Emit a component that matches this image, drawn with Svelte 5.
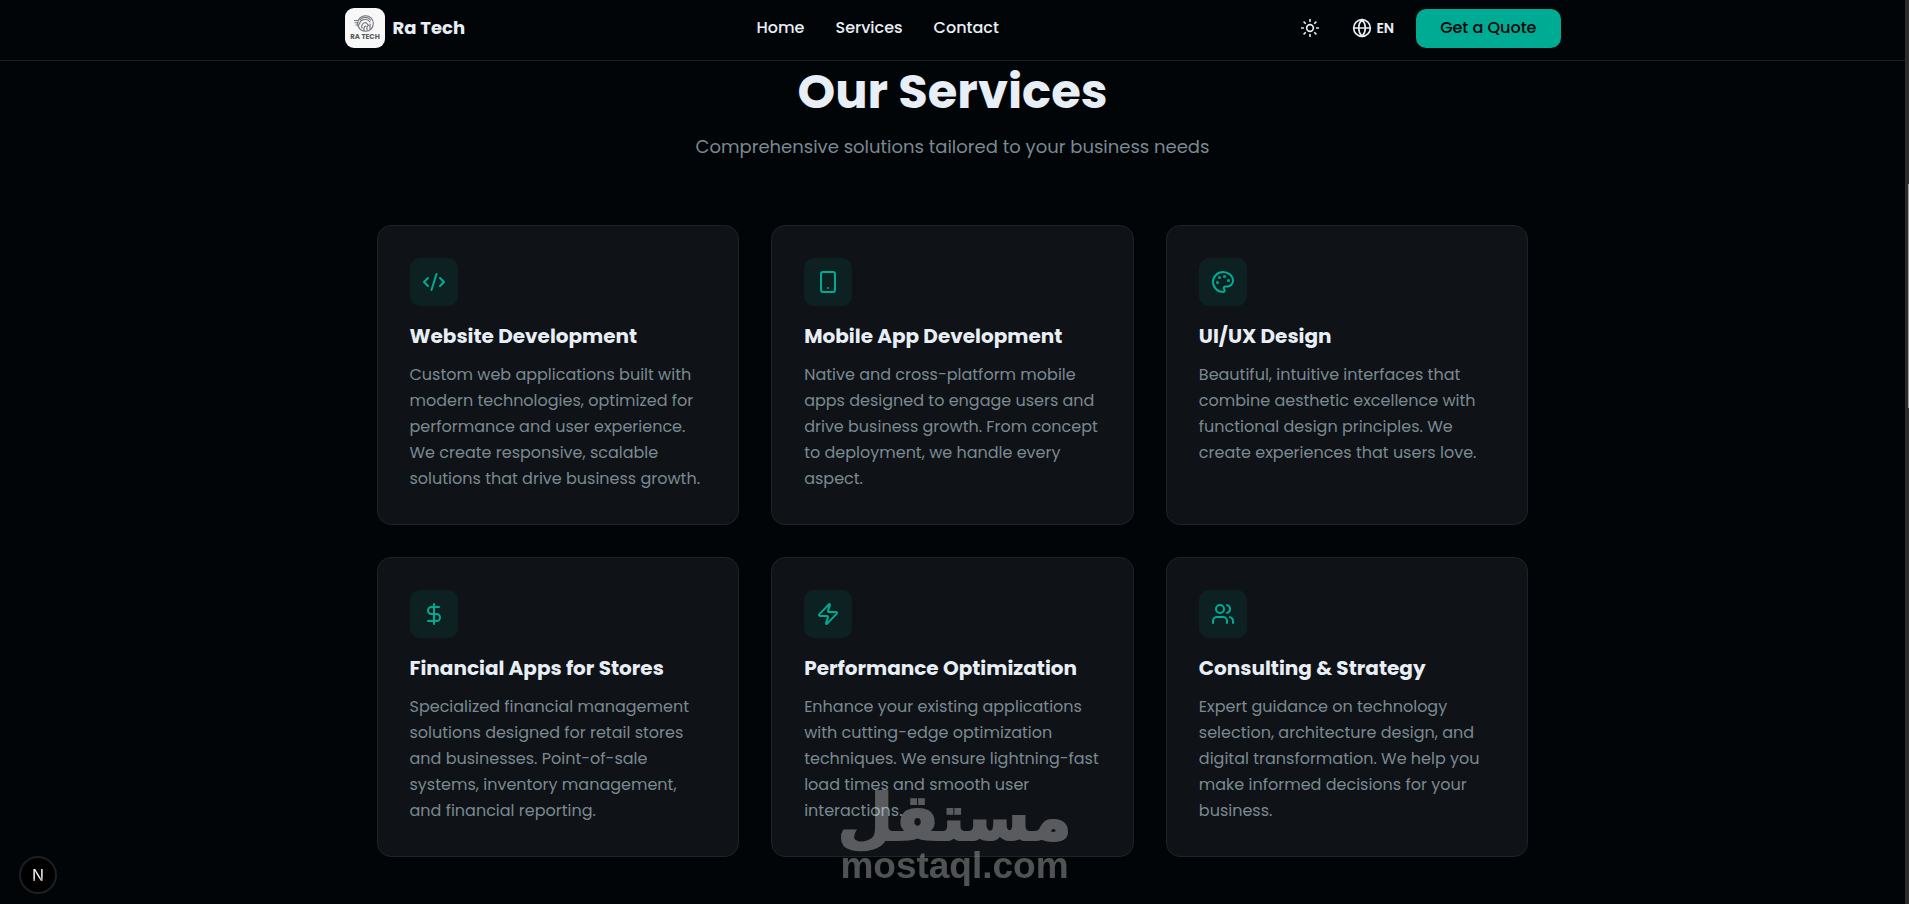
<script lang="ts">
    type Service = {
        title: string;
        text: string;
        icon: string;
    };

    const links = ["Home", "Services", "Contact"];

    const services: Service[] = [
        {
            title: "Website Development",
            text: "Custom web applications built with modern technologies, optimized for performance and user experience. We create responsive, scalable solutions that drive business growth.",
            icon: "code",
        },
        {
            title: "Mobile App Development",
            text: "Native and cross-platform mobile apps designed to engage users and drive business growth. From concept to deployment, we handle every aspect.",
            icon: "phone",
        },
        {
            title: "UI/UX Design",
            text: "Beautiful, intuitive interfaces that combine aesthetic excellence with functional design principles. We create experiences that users love.",
            icon: "palette",
        },
        {
            title: "Financial Apps for Stores",
            text: "Specialized financial management solutions designed for retail stores and businesses. Point-of-sale systems, inventory management, and financial reporting.",
            icon: "dollar",
        },
        {
            title: "Performance Optimization",
            text: "Enhance your existing applications with cutting-edge optimization techniques. We ensure lightning-fast load times and smooth user interactions.",
            icon: "zap",
        },
        {
            title: "Consulting & Strategy",
            text: "Expert guidance on technology selection, architecture design, and digital transformation. We help you make informed decisions for your business.",
            icon: "users",
        },
    ];
</script>

<div class="page">
    <header class="header">
        <div class="header-inner">
            <a class="brand" href="#home">
                <svg class="brand-logo" viewBox="0 0 40 40" width="40" height="40" aria-hidden="true">
                    <rect width="40" height="40" rx="9" fill="#f8f8f8" />
                    <g fill="none" stroke="#6b7075" stroke-width="1.1" stroke-linecap="round">
                        <circle cx="20.5" cy="15.5" r="7.8" />
                        <path d="M15 12c2.500-3.500 8-3.500 10.500 0M14.500 16c.5-3 3-4.500 6-4.500 2 0 3.500 1 4.500 2.500M17 20c-1-3 1-5.500 4-5.500l2.500 3-1.500 1v3.500M19 22.500c-.5-2 0-3.500 1.500-4.500M25 16v5" />
                        <path d="M9.500 12.500h3M10 14.800h3M11 17h3" />
                    </g>
                    <text x="20" y="31" text-anchor="middle" class="brand-mark">RA TECH</text>
                </svg>
                <span>Ra Tech</span>
            </a>

            <nav class="nav" aria-label="Main">
                {#each links as link}
                    <a href="#{link.toLowerCase()}">{link}</a>
                {/each}
            </nav>

            <div class="actions">
                <button type="button" class="tool" aria-label="Toggle theme">
                    <svg class="line" viewBox="0 0 24 24" width="20" height="20" aria-hidden="true">
                        <circle cx="12" cy="12" r="4" />
                        <path d="M12 2v2M12 20v2M4.930 4.930l1.410 1.410M17.660 17.660l1.410 1.410M2 12h2M20 12h2M6.340 17.660l-1.410 1.410M19.070 4.930l-1.410 1.410" />
                    </svg>
                </button>
                <button type="button" class="tool tool--lang">
                    <svg class="line" viewBox="0 0 24 24" width="20" height="20" aria-hidden="true">
                        <circle cx="12" cy="12" r="10" />
                        <path d="M12 2a14.500 14.500 0 0 0 0 20 14.500 14.500 0 0 0 0-20M2 12h20" />
                    </svg>
                    <span>EN</span>
                </button>
                <button type="button" class="quote">Get a Quote</button>
            </div>
        </div>
    </header>

    <main class="services">
        <h1>Our Services</h1>
        <p class="lead">Comprehensive solutions tailored to your business needs</p>

        <div class="grid">
            {#each services as service}
                <article class="card">
                    <div class="card-icon">
                        <svg class="line" viewBox="0 0 24 24" width="24" height="24" aria-hidden="true">
                            {#if service.icon === "code"}
                                <path d="m18 16 4-4-4-4M6 8l-4 4 4 4M14.500 4l-5 16" />
                            {:else if service.icon === "phone"}
                                <rect x="5" y="2" width="14" height="20" rx="2" />
                                <path d="M12 18h.01" />
                            {:else if service.icon === "palette"}
                                <circle cx="13.5" cy="6.5" r=".5" fill="currentColor" />
                                <circle cx="17.5" cy="10.5" r=".5" fill="currentColor" />
                                <circle cx="8.5" cy="7.5" r=".5" fill="currentColor" />
                                <circle cx="6.5" cy="12.5" r=".5" fill="currentColor" />
                                <path d="M12 2C6.500 2 2 6.500 2 12s4.500 10 10 10c.926 0 1.648-.746 1.648-1.688 0-.437-.18-.835-.437-1.125-.29-.289-.438-.652-.438-1.125a1.640 1.640 0 0 1 1.668-1.668h1.996c3.051 0 5.555-2.503 5.555-5.554C21.965 6.012 17.461 2 12 2z" />
                            {:else if service.icon === "dollar"}
                                <path d="M12 2v20M17 5H9.500a3.500 3.500 0 0 0 0 7h5a3.500 3.500 0 0 1 0 7H6" />
                            {:else if service.icon === "zap"}
                                <path d="M4 14a1 1 0 0 1-.78-1.630l9.900-10.200a.5.5 0 0 1 .86.46l-1.920 6.020A1 1 0 0 0 13 10h7a1 1 0 0 1 .78 1.630l-9.900 10.200a.5.5 0 0 1-.86-.46l1.920-6.020A1 1 0 0 0 11 14z" />
                            {:else}
                                <path d="M16 21v-2a4 4 0 0 0-4-4H6a4 4 0 0 0-4 4v2M22 21v-2a4 4 0 0 0-3-3.870M16 3.130a4 4 0 0 1 0 7.750" />
                                <circle cx="9" cy="7" r="4" />
                            {/if}
                        </svg>
                    </div>
                    <h2>{service.title}</h2>
                    <p>{service.text}</p>
                </article>
            {/each}
        </div>
    </main>
</div>

<div class="watermark">
    <span class="watermark-ar" lang="ar" dir="rtl">مستقل</span>
    <span class="watermark-en">mostaql.com</span>
</div>

<button type="button" class="dev-badge" aria-label="Open developer tools"><span>N</span></button>

<div class="scrollbar" aria-hidden="true">
    <div class="scrollbar-thumb"></div>
</div>

<style>
    :global(body) {
        background: #020508;
    }

    .page {
        min-height: 100vh;
        box-sizing: border-box;
        padding-right: 4px;
        color: #e8eef5;
        font-family: Poppins, Inter, sans-serif;
        font-size: 16px;
    }

    .line {
        fill: none;
        stroke: currentColor;
        stroke-width: 2;
        stroke-linecap: round;
        stroke-linejoin: round;
    }

    /* Header */
    .header {
        padding: 8px 32px 12px;
        border-bottom: 1px solid #1c2024;
    }

    .header-inner {
        display: flex;
        align-items: center;
        justify-content: space-between;
        max-width: 1216px;
        margin: 0 auto;
        line-height: 20px;
    }

    .header a {
        color: inherit;
        text-decoration: none;
    }

    .brand {
        display: flex;
        align-items: center;
        gap: 8px;
        font-size: 18px;
        font-weight: 700;
    }

    .brand-mark {
        fill: #55585c;
        font-size: 7px;
        font-weight: 700;
    }

    .nav {
        display: flex;
        gap: 31px;
        font-weight: 500;
    }

    .actions {
        display: flex;
        align-items: center;
        gap: 12px;
    }

    .actions button {
        border: 0;
        font: inherit;
        cursor: pointer;
    }

    .actions .tool {
        display: flex;
        align-items: center;
        gap: 4px;
        padding: 10px;
        background: transparent;
        color: inherit;
    }

    .actions .tool--lang {
        font-size: 14px;
        font-weight: 600;
        line-height: 20px;
    }

    .actions .quote {
        height: 39px;
        padding: 0 24px;
        border-radius: 10px;
        background: #00ab94;
        color: #020508;
        font-weight: 500;
    }

    /* Services */
    .services {
        max-width: 1152px;
        margin: 0 auto;
        padding: 7px 32px 40px;
        text-align: center;
    }

    h1 {
        margin: 0 0 16px;
        font-size: 48px;
        font-weight: 700;
        line-height: 48px;
    }

    .lead {
        margin: 0 0 64px;
        color: #7b8992;
        font-size: 18px;
        line-height: 29px;
    }

    .grid {
        display: grid;
        grid-template-columns: repeat(3, 1fr);
        gap: 32px;
        text-align: left;
    }

    .card {
        padding: 32px;
        border: 1px solid #1f2327;
        border-radius: 14px;
        background: #0f1216;
    }

    .card-icon {
        display: flex;
        align-items: center;
        justify-content: center;
        width: 48px;
        height: 48px;
        border-radius: 10px;
        background: #0e2122;
        color: #00ab94;
    }

    .card h2 {
        margin: 16px 0 12px;
        font-size: 20px;
        font-weight: 700;
        line-height: 28px;
    }

    .card p {
        margin: 0;
        color: #7b8992;
        line-height: 26px;
    }

    /* Overlays */
    .watermark {
        position: fixed;
        bottom: 18px;
        left: 50%;
        display: flex;
        flex-direction: column;
        align-items: center;
        transform: translateX(-50%);
        color: #fff;
        font-weight: 700;
        opacity: 0.31;
        pointer-events: none;
    }

    .watermark-ar {
        font-family: "DejaVu Sans", sans-serif;
        font-size: 64px;
        line-height: 56px;
        -webkit-text-stroke: 2px #fff;
    }

    .watermark-en {
        font-family: "Liberation Sans", sans-serif;
        font-size: 37px;
        line-height: 40px;
    }

    .dev-badge {
        position: fixed;
        bottom: 10px;
        left: 19px;
        width: 38px;
        height: 38px;
        padding: 0;
        border: 2px solid #1d1f21;
        border-radius: 50%;
        background: #000;
        font-family: Inter, sans-serif;
        font-size: 16px;
        cursor: pointer;
    }

    .dev-badge span {
        background: linear-gradient(170deg, #fff 60%, #444);
        background-clip: text;
        color: transparent;
    }

    .scrollbar {
        position: fixed;
        inset: 0 0 0 auto;
        width: 4px;
        background: #2c2c2c;
    }

    .scrollbar-thumb {
        width: 1px;
        height: 224px;
        margin: 184px 0 0 auto;
        background: #9f9f9f;
    }
</style>
